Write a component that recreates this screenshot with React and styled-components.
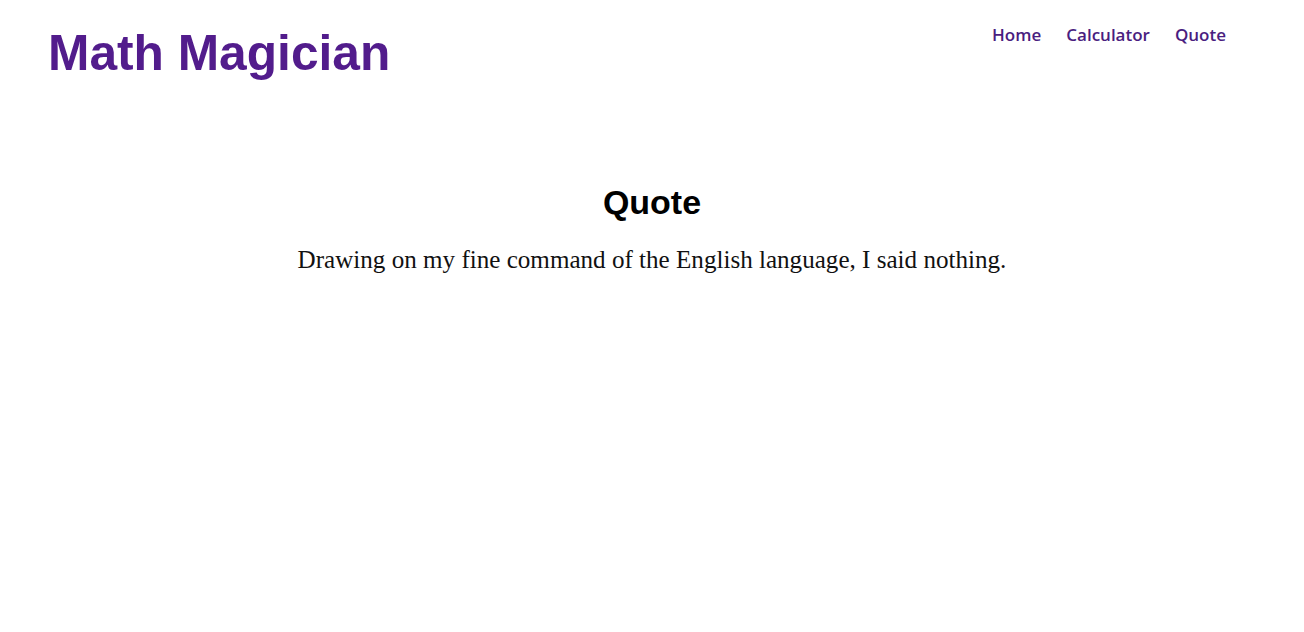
import React from "react";
import styled, { createGlobalStyle } from "styled-components";

const GlobalStyle = createGlobalStyle`
  body {
    margin: 0;
    background: #fff;
    font-family: "Liberation Sans", Arial, sans-serif;
  }
`;

const Header = styled.header`
  display: flex;
  justify-content: space-between;
  align-items: flex-start;
  padding: 0 78px 0 48px;
`;

const Logo = styled.h1`
  margin: 24px 0 0;
  font-size: 49.7px;
  font-weight: 700;
  line-height: 58px;
  color: #521c8c;
`;

const Nav = styled.nav`
  display: flex;
  gap: 25px;
  margin-top: 23px;
`;

const NavLink = styled.a`
  font-family: "Open Sans", sans-serif;
  font-size: 17px;
  font-weight: 600;
  color: #4a1d80;
  text-decoration: none;
  cursor: pointer;
`;

const Main = styled.main`
  display: flex;
  flex-direction: column;
  align-items: center;
  padding-top: 100px;
`;

const Title = styled.h2`
  margin: 0;
  font-size: 34px;
  font-weight: 700;
  line-height: 40px;
  color: #000;
`;

const QuoteText = styled.p`
  margin: 23px 0 0;
  font-family: "Liberation Serif", "Times New Roman", serif;
  font-size: 25.1px;
  line-height: 30px;
  color: #111;
`;

const App = () => {
  return (
    <>
      <GlobalStyle />
      <Header>
        <Logo>Math Magician</Logo>
        <Nav>
          <NavLink>Home</NavLink>
          <NavLink>Calculator</NavLink>
          <NavLink>Quote</NavLink>
        </Nav>
      </Header>
      <Main>
        <Title>Quote</Title>
        <QuoteText>
          Drawing on my fine command of the English language, I said nothing.
        </QuoteText>
      </Main>
    </>
  );
};

export default App;
